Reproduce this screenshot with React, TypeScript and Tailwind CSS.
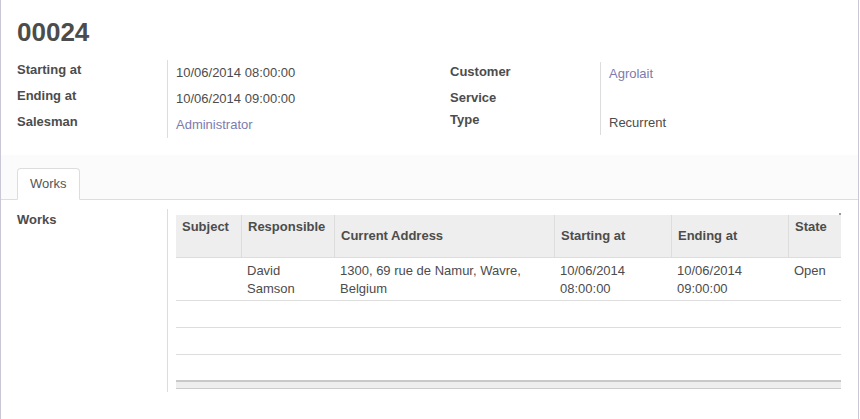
import React from "react";

const LEFT_FIELDS = [
  { label: "Starting at", value: "10/06/2014 08:00:00" },
  { label: "Ending at", value: "10/06/2014 09:00:00" },
  { label: "Salesman", value: "Administrator", link: true },
];

function FieldRow({ label, value, link, h, vpt }: { label: string; value?: string; link?: boolean; h: string; vpt: string }) {
  return (
    <div className={`flex ${h}`}>
      <div className="w-[150px] pt-[1px] font-bold">{label}</div>
      <div className={`flex-1 border-l border-[#dddddd] pl-[8px] ${vpt} ${link ? "text-[#7c7bad]" : ""}`}>{value}</div>
    </div>
  );
}

export default function App() {
  return (
    <div className="w-[860px] min-h-[419px] bg-white">
      <div className="w-[859px] min-h-[419px] border-x border-[#c9c7d6] bg-white font-['Liberation_Sans',Arial,sans-serif] text-[13px] leading-[18px] text-[#4c4c4c]">
        {/* Header */}
        <div className="px-[16px]">
          <h1 className="pt-[17px] text-[26px] leading-[30px] font-bold">00024</h1>
          <div className="mt-[13px] flex items-start">
            <div className="w-[433px] flex flex-col">
              {LEFT_FIELDS.map((f) => (
                <FieldRow key={f.label} label={f.label} value={f.value} link={f.link} h="h-[26px]" vpt="pt-[4px]" />
              ))}
            </div>
            <div className="flex-1 flex flex-col pt-[2px]">
              <FieldRow label="Customer" value="Agrolait" link h="h-[26px]" vpt="pt-[3px]" />
              <FieldRow label="Service" h="h-[22px]" vpt="" />
              <FieldRow label="Type" value="Recurrent" h="h-[25px]" vpt="pt-[4px]" />
            </div>
          </div>
        </div>

        {/* Tabs */}
        <div className="mt-[17px] flex items-end bg-[#fbfbfb] pt-[13px] px-[16px] border-b border-[#dddddd]">
          <div className="-mb-px rounded-t-[4px] border border-[#dddddd] border-b-white bg-white px-[12px] py-[6px] text-[#555555]">
            Works
          </div>
        </div>

        {/* Works page */}
        <div className="mt-[9px] px-[16px] flex">
          <div className="w-[150px] pt-[2px] font-bold">Works</div>
          <div className="flex-1 min-w-0 border-l border-[#dddddd] pl-[8px] pt-[6px] pb-[3px]">
            <div className="relative w-[665px]">
              <span className="absolute -top-[2px] right-0 w-[2px] h-[2px] bg-[#9a9a9a]" />
              <div className="w-[665px] overflow-hidden">
                <div className="w-[700px]">
                  <div className="grid grid-cols-[65px_93px_220px_117px_117px_88px] h-[43px] bg-[#eeeeee] border-b border-[#dddddd] font-bold">
                    <div className="pl-[6px] pt-[3px]">Subject</div>
                    <div className="pl-[6px] pt-[3px] border-l border-[#dddddd]">Responsible</div>
                    <div className="pl-[6px] flex items-center border-l border-[#dddddd]">Current Address</div>
                    <div className="pl-[6px] flex items-center border-l border-[#dddddd]">Starting at</div>
                    <div className="pl-[6px] flex items-center border-l border-[#dddddd]">Ending at</div>
                    <div className="pl-[6px] pt-[3px] border-l border-[#dddddd]">State</div>
                  </div>
                  <div className="grid grid-cols-[65px_93px_220px_117px_117px_88px] h-[43px] border-b border-[#dddddd]">
                    <div className="pl-[6px] pt-[4px]"></div>
                    <div className="pl-[6px] pt-[4px]">David<br />Samson</div>
                    <div className="pl-[6px] pt-[4px]">1300, 69 rue de Namur, Wavre,<br />Belgium</div>
                    <div className="pl-[6px] pt-[4px]">10/06/2014<br />08:00:00</div>
                    <div className="pl-[6px] pt-[4px]">10/06/2014<br />09:00:00</div>
                    <div className="pl-[6px] pt-[4px]">Open</div>
                  </div>
                  <div className="h-[27px] border-b border-[#dddddd]" />
                  <div className="h-[27px] border-b border-[#dddddd]" />
                  <div className="h-[25px]" />
                  <div className="h-[9px] border-t-2 border-b border-t-[#c8c8c8] border-b-[#cccccc] bg-[#eeeeee]" />
                </div>
              </div>
            </div>
          </div>
        </div>
      </div>
    </div>
  );
}
